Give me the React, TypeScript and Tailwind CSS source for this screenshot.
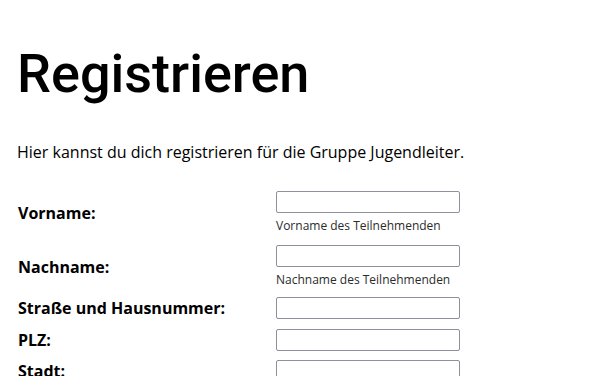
const felder = [
  { label: "Vorname:", hint: "Vorname des Teilnehmenden", abstand: "mb-[11px]" },
  { label: "Nachname:", hint: "Nachname des Teilnehmenden", abstand: "mb-[9px]" },
  { label: "Straße und Hausnummer:", abstand: "mb-[10px]" },
  { label: "PLZ:", abstand: "mb-[9px]" },
  { label: "Stadt:", abstand: "" },
];

function App() {
  return (
    <div className="min-h-screen bg-white px-[17px] pt-[38px] text-black font-['Open_Sans',sans-serif]">
      <h1 className="text-[54px] leading-[72px] font-medium font-['Roboto',sans-serif]">
        Registrieren
      </h1>

      <p className="mt-[30px] text-[16px] leading-[24px]">
        Hier kannst du dich registrieren für die Gruppe Jugendleiter.
      </p>

      <div className="mt-[27px] flex flex-col">
        {felder.map((f) => (
          <div key={f.label} className={"flex items-center " + f.abstand}>
            <label className="w-[259px] pl-[1px] text-[16px] font-bold leading-[22px]">
              {f.label}
            </label>
            <div className="flex flex-col">
              <input
                type="text"
                className="h-[22px] w-[184px] rounded-[2px] border border-[#8f8f9d] bg-white"
              />
              {f.hint && (
                <span className="mt-[5px] text-[12px] leading-[16px] text-[#2b2b2b]">
                  {f.hint}
                </span>
              )}
            </div>
          </div>
        ))}
      </div>
    </div>
  );
}

export default App;
